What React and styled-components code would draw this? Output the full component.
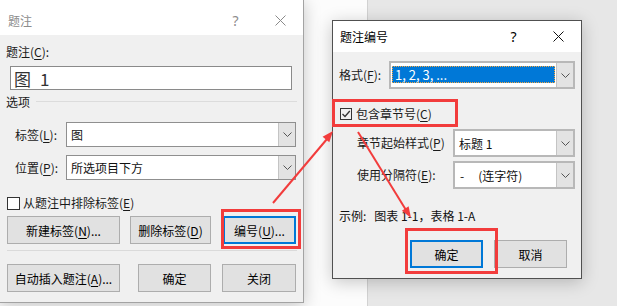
import React from 'react';
import styled, { createGlobalStyle } from 'styled-components';

const FONT = `"Noto Sans CJK SC", "Noto Sans", sans-serif`;

const Global = createGlobalStyle`
  html, body { margin: 0; padding: 0; background: #e6e6e6; }
  body { font-family: ${FONT}; font-size: 12px; color: #000; }
  u { text-decoration: underline; text-underline-offset: 2px; }
`;

const Desktop = styled.div`
  position: relative;
  width: 617px;
  height: 306px;
  overflow: hidden;
  background: #e7e7e7;
  display: flex;
`;

const Page = styled.div`
  width: 368px;
  height: 100%;
  box-sizing: border-box;
  background: #fcfcfc;
  border-right: 1px solid #d2d2d2;
`;

const Window = styled.div`
  position: absolute;
  left: ${p => p.$x}px;
  top: ${p => p.$y}px;
  width: ${p => p.$w}px;
  height: ${p => p.$h}px;
  box-sizing: border-box;
  border: 1px solid ${p => (p.$active ? '#505050' : '#a3a3a3')};
  background: #f0f0f0;
  display: flex;
  flex-direction: column;
  box-shadow: 0 3px 16px rgba(0, 0, 0, 0.22);
`;

const TitleBar = styled.div`
  flex: none;
  height: ${p => p.$h}px;
  box-sizing: border-box;
  padding: ${p => p.$pt}px 0 0 ${p => p.$pl}px;
  background: #fff;
  display: flex;
  align-items: center;
  color: ${p => (p.$active ? '#000' : '#8c8c8c')};
`;

const TitleText = styled.div`
  flex: 1;
  font-size: 12px;
  line-height: 16px;
`;

const TitleButton = styled.div`
  width: 45px;
  display: flex;
  align-items: center;
  justify-content: center;
  font-family: "Noto Sans", sans-serif;
  font-size: 14px;
  line-height: 16px;
`;

const Body = styled.div`
  flex: 1;
  display: flex;
  flex-direction: column;
  padding: ${p => p.$pad};
`;

const Row = styled.div`
  display: flex;
  align-items: center;
  flex: none;
  height: ${p => p.$h}px;
  margin-top: ${p => p.$mt || 0}px;
  padding-left: ${p => p.$pl || 0}px;
  padding-right: ${p => p.$pr || 0}px;
  justify-content: ${p => p.$justify || 'flex-start'};
`;

const Label = styled.div`
  flex: none;
  width: ${p => (p.$w ? `${p.$w}px` : 'auto')};
  line-height: 18px;
  white-space: nowrap;
  color: #1a1a1a;
`;

const TextBox = styled.div`
  flex: none;
  margin: 5px 0 0 4px;
  width: 282px;
  height: 24px;
  box-sizing: border-box;
  border: 1px solid #8a8a8a;
  background: #fff;
  display: flex;
  align-items: center;
  padding-left: 3px;
  font-size: 17px;
  color: #333;
  white-space: pre;
`;

const Section = styled.div`
  flex: none;
  margin-top: 2px;
  height: 18px;
  display: flex;
  align-items: center;
  gap: 6px;
  color: #1a1a1a;
  &::after {
    content: '';
    flex: 1;
    height: 1px;
    background: #dcdcdc;
  }
`;

const Select = styled.div`
  flex: none;
  width: ${p => p.$w}px;
  height: 100%;
  box-sizing: border-box;
  border: ${p => (p.$thick ? '2px solid #b8b8b8' : '1px solid #8f8f8f')};
  background: #fff;
  display: flex;
  align-items: stretch;
`;

const SelectValue = styled.div`
  flex: 1;
  display: flex;
  align-items: center;
  padding-left: ${p => p.$pl || 4}px;
  white-space: pre;
  color: #111;
`;

const Highlighted = styled.div`
  flex: 1;
  align-self: flex-start;
  margin: 3px 1px 0 1px;
  height: 17px;
  box-sizing: border-box;
  background: #0078d7;
  border: 1px dotted #f5a742;
  color: #fff;
  display: flex;
  align-items: center;
  padding-left: 2px;
  font-size: 13px;
`;

const DropButton = styled.div`
  flex: none;
  width: 16px;
  background: #e3e3e3;
  border-left: 1px solid #c4c4c4;
  display: flex;
  align-items: center;
  justify-content: center;
`;

const Check = styled.div`
  flex: none;
  width: ${p => p.$size}px;
  height: ${p => p.$size}px;
  box-sizing: border-box;
  border: 1px solid #333;
  background: ${p => (p.$checked ? 'transparent' : '#fff')};
  margin-left: 1px;
  margin-right: ${p => p.$gap}px;
  display: flex;
  align-items: center;
  justify-content: center;
`;

const Button = styled.div`
  flex: none;
  width: ${p => p.$w}px;
  height: 28px;
  margin-left: ${p => p.$ml || 0}px;
  box-sizing: border-box;
  border: ${p => (p.$focus ? '2px solid #0078d7' : '1px solid #adadad')};
  background: #e1e1e1;
  display: flex;
  align-items: center;
  justify-content: center;
  white-space: nowrap;
  color: #000;
`;

const Divider = styled.div`
  flex: none;
  height: 1px;
  margin: 6px 0 0 1px;
  background: #dadada;
`;

const Example = styled.div`
  flex: none;
  margin-top: 18px;
  line-height: 18px;
  white-space: pre;
  color: #111;
`;

const Gap = styled.span`
  display: inline-block;
  width: ${p => p.$w}px;
`;

const Mark = styled.div`
  position: absolute;
  left: ${p => p.$x}px;
  top: ${p => p.$y}px;
  width: ${p => p.$w}px;
  height: ${p => p.$h}px;
  box-sizing: border-box;
  border: 3px solid #f23c3c;
  pointer-events: none;
`;

const Arrows = styled.svg`
  position: absolute;
  left: 0;
  top: 0;
  pointer-events: none;
`;

const Chevron = () => (
  <svg width="9" height="5" viewBox="0 0 9 5">
    <polyline points="0.5,0.5 4.5,4.5 8.5,0.5" fill="none" stroke="#555" strokeWidth="1" />
  </svg>
);

const CloseIcon = ({ color }) => (
  <svg width="11" height="11" viewBox="0 0 11 11">
    <path d="M0.5 0.5 L10.5 10.5 M10.5 0.5 L0.5 10.5" stroke={color} strokeWidth="1" fill="none" />
  </svg>
);

const CheckMark = () => (
  <svg width="10" height="10" viewBox="0 0 10 10">
    <polyline points="1.5,5 4,7.5 8.8,2" fill="none" stroke="#333" strokeWidth="1.3" />
  </svg>
);

const Combo = ({ w, thick, children, selected, pl }) => (
  <Select $w={w} $thick={thick}>
    {selected ? <Highlighted>{children}</Highlighted> : <SelectValue $pl={pl}>{children}</SelectValue>}
    <DropButton><Chevron /></DropButton>
  </Select>
);

export default function App() {
  return (
    <>
      <Global />
      <Desktop>
        <Page />

        <Window $x={-1} $y={-1} $w={305} $h={304}>
          <TitleBar $h={35} $pt={6} $pl={8}>
            <TitleText>题注</TitleText>
            <TitleButton>?</TitleButton>
            <TitleButton><CloseIcon color="#8a8a8a" /></TitleButton>
          </TitleBar>
          <Body $pad="8px 6px 0 6px">
            <Label>题注(<u>C</u>):</Label>
            <TextBox>图<Gap $w={9} />1</TextBox>
            <Section>选项</Section>
            <Row $h={25} $mt={12} $pl={9}>
              <Label $w={51}>标签(<u>L</u>):</Label>
              <Combo w={230}>图</Combo>
            </Row>
            <Row $h={25} $mt={8} $pl={9}>
              <Label $w={51}>位置(<u>P</u>):</Label>
              <Combo w={230}>所选项目下方</Combo>
            </Row>
            <Row $h={16} $mt={15}>
              <Check $size={13} $gap={3} />
              <Label>从题注中排除标签(<u>E</u>)</Label>
            </Row>
            <Row $h={28} $mt={5} $pl={1}>
              <Button $w={113}>新建标签(<u>N</u>)...</Button>
              <Button $w={81} $ml={10}>删除标签(<u>D</u>)</Button>
              <Button $w={73} $ml={12} $focus>编号(<u>U</u>)...</Button>
            </Row>
            <Divider />
            <Row $h={28} $mt={13} $pl={1}>
              <Button $w={113}>自动插入题注(<u>A</u>)...</Button>
              <Button $w={73} $ml={18}>确定</Button>
              <Button $w={74} $ml={11}>关闭</Button>
            </Row>
          </Body>
        </Window>

        <Window $x={332} $y={20} $w={250} $h={259} $active>
          <TitleBar $h={31} $pt={0} $pl={7} $active>
            <TitleText>题注编号</TitleText>
            <TitleButton>?</TitleButton>
            <TitleButton><CloseIcon color="#111" /></TitleButton>
          </TitleBar>
          <Body $pad="9px 7px 0 6px">
            <Row $h={28}>
              <Label $w={50}>格式(<u>F</u>):</Label>
              <Combo w={186} thick selected>1, 2, 3, ...</Combo>
            </Row>
            <Row $h={16} $mt={17}>
              <Check $size={12} $gap={4} $checked><CheckMark /></Check>
              <Label>包含章节号(<u>C</u>)</Label>
            </Row>
            <Row $h={28} $mt={7} $pl={18}>
              <Label $w={96}>章节起始样式(<u>P</u>)</Label>
              <Combo w={122} thick>标题 1</Combo>
            </Row>
            <Row $h={28} $mt={4} $pl={18}>
              <Label $w={96}>使用分隔符(<u>E</u>):</Label>
              <Combo w={122} thick pl={5}>-<Gap $w={14} />(连字符)</Combo>
            </Row>
            <Example>示例:<Gap $w={8} />图表 1-1，表格 1-A</Example>
            <Row $h={28} $mt={15} $justify="flex-end" $pr={7}>
              <Button $w={73} $focus>确定</Button>
              <Button $w={73} $ml={11}>取消</Button>
            </Row>
          </Body>
        </Window>

        <Mark $x={221} $y={209} $w={80} $h={40} />
        <Mark $x={332} $y={99} $w={126} $h={28} />
        <Mark $x={405} $y={228} $w={93} $h={46} />

        <Arrows width="617" height="306" viewBox="0 0 617 306">
          <line x1="273" y1="203" x2="327" y2="139" stroke="#f23c3c" strokeWidth="2" />
          <polygon points="333,131 329.3,142.2 322.6,136.7" fill="#f23c3c" />
          <line x1="358" y1="132" x2="406" y2="210" stroke="#f23c3c" strokeWidth="2" />
          <polygon points="411,218 408.6,206.3 401.9,210.7" fill="#f23c3c" />
        </Arrows>
      </Desktop>
    </>
  );
}
